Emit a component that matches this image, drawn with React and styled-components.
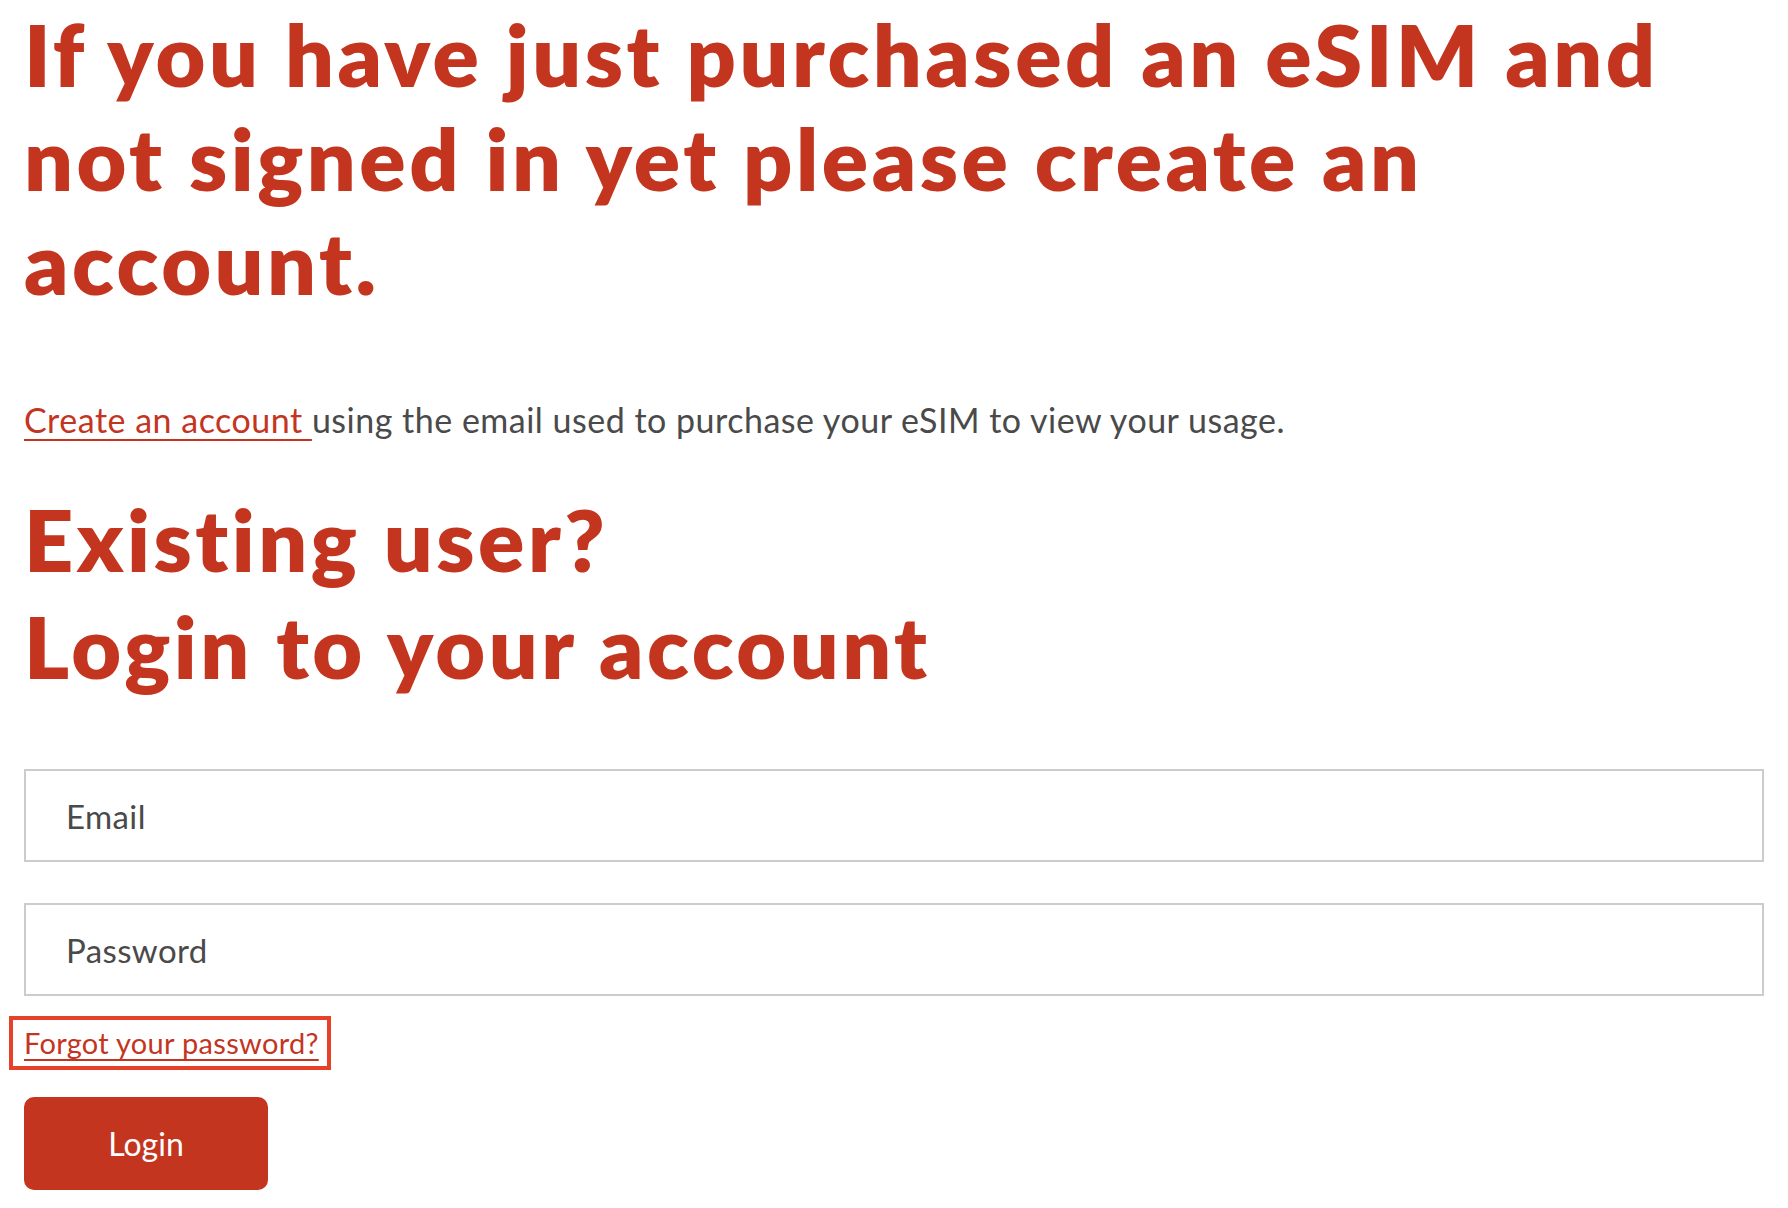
import React from 'react';
import styled, { createGlobalStyle } from 'styled-components';

const GlobalStyle = createGlobalStyle`
  body {
    margin: 0;
    background: #fff;
    font-family: Lato, "Open Sans", sans-serif;
  }
`;

const Page = styled.main`
  padding: 2px 24px 40px;
`;

const Title = styled.h1`
  margin: 0;
  font-size: 86px;
  line-height: ${(p) => p.$lh || 104}px;
  font-weight: 800;
  letter-spacing: 3.5px;
  color: #c4351f;
  margin-top: ${(p) => p.$top || 0}px;
`;

const Intro = styled.p`
  margin: 82px 0 0;
  font-size: 34px;
  line-height: 48px;
  letter-spacing: 0.5px;
  color: #4a4a4a;
`;

const TextLink = styled.a`
  color: #c4351f;
  text-decoration: underline;
  text-decoration-thickness: 2px;
  text-underline-offset: 6px;
`;

const Form = styled.form`
  margin-top: 70px;
  display: flex;
  flex-direction: column;
  align-items: flex-start;
`;

const Field = styled.input`
  box-sizing: border-box;
  width: 100%;
  height: 93px;
  margin-bottom: ${(p) => p.$gap || 0}px;
  padding: 0 40px;
  border: 2px solid #cccccc;
  border-radius: 0;
  font-family: Lato, sans-serif;
  font-size: 33px;
  letter-spacing: 0.4px;
  color: #333;
  outline: none;

  &::placeholder {
    color: #4a4a4a;
  }
`;

const Forgot = styled.a`
  display: inline-block;
  margin: 24px 0 0 -11px;
  padding: 0 8px 0 11px;
  line-height: 46px;
  font-size: 29px;
  letter-spacing: 0.3px;
  color: #c4351f;
  text-decoration: underline;
  text-decoration-thickness: 2px;
  text-underline-offset: 5px;
  outline: 4px solid #e8412a;
`;

const LoginButton = styled.button`
  margin-top: 31px;
  width: 244px;
  height: 93px;
  border: none;
  border-radius: 10px;
  background: #c4351f;
  color: #fff;
  font-family: Lato, sans-serif;
  font-size: 32px;
  cursor: pointer;
`;

export default function App() {
  return (
    <>
      <GlobalStyle />
      <Page>
        <Title>
          If you have just purchased an eSIM and not signed in yet please create an account.
        </Title>
        <Intro>
          <TextLink href="#">Create an account </TextLink>
          using the email used to purchase your eSIM to view your usage.
        </Intro>
        <Title $top={41} $lh={107}>
          Existing user?
          <br />
          Login to your account
        </Title>
        <Form onSubmit={(e) => e.preventDefault()}>
          <Field type="email" placeholder="Email" $gap={41} />
          <Field type="password" placeholder="Password" />
          <Forgot href="#">Forgot your password?</Forgot>
          <LoginButton type="submit">Login</LoginButton>
        </Form>
      </Page>
    </>
  );
}
